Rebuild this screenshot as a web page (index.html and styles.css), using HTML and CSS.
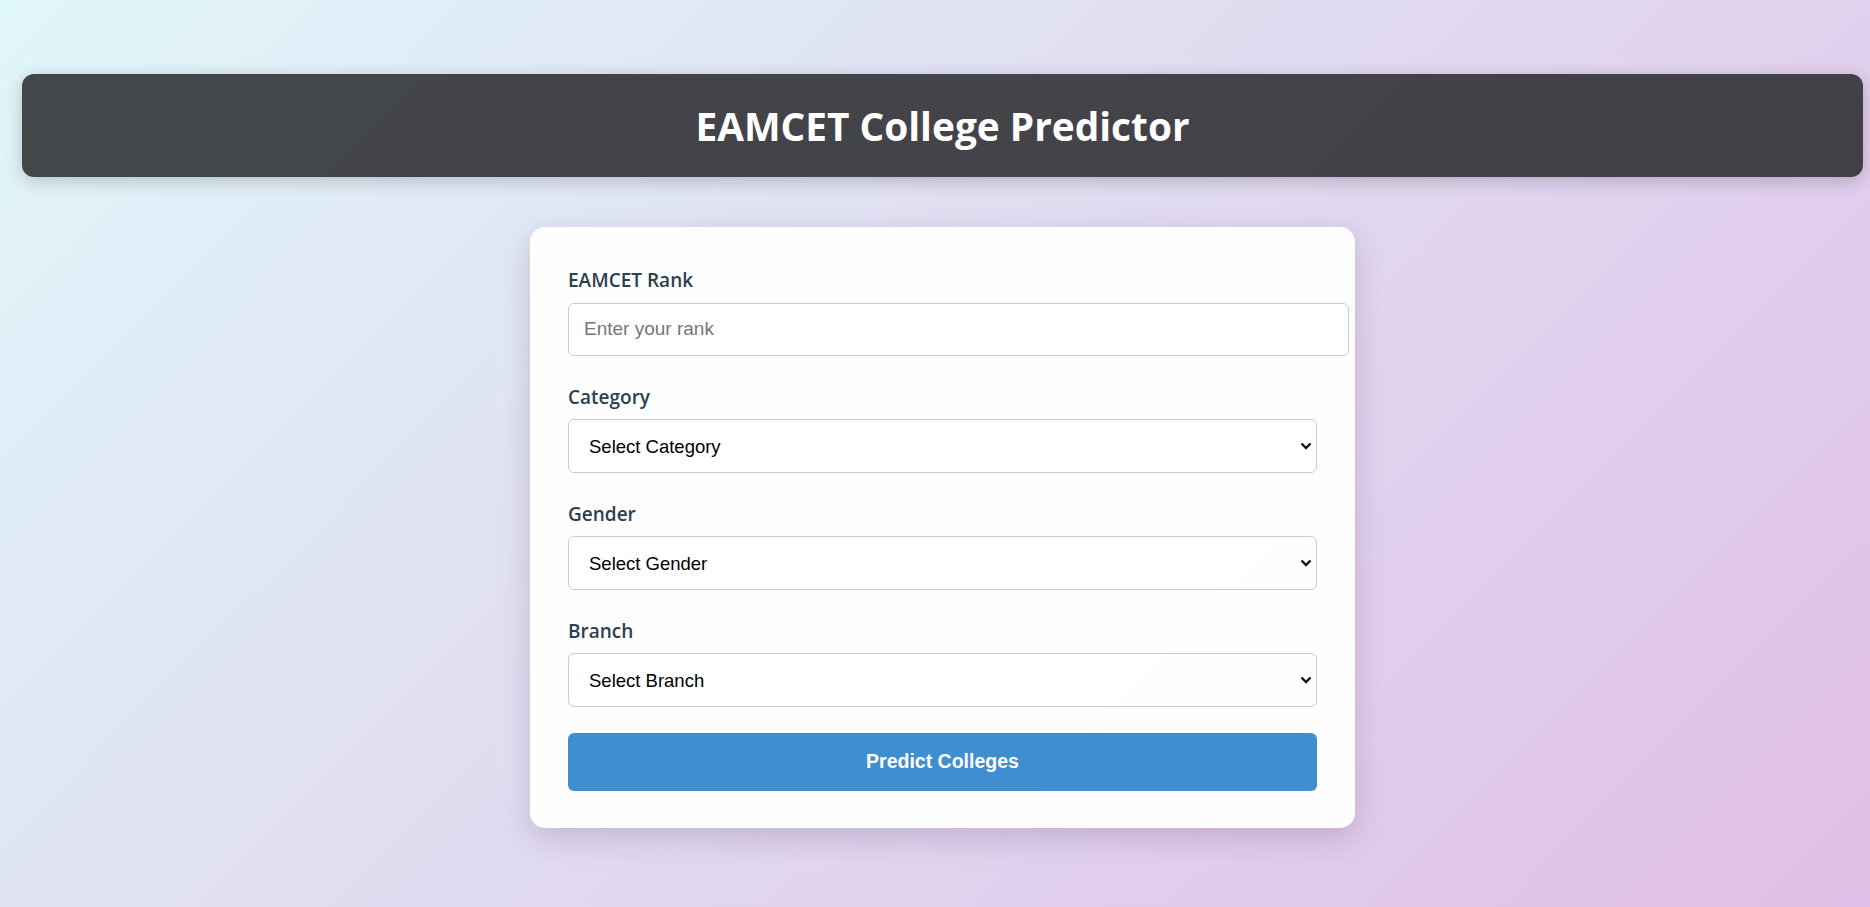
FILE: index.html
```html
<!DOCTYPE html>
<html lang="en">
<head>
<meta charset="utf-8">
<title>EAMCET College Predictor</title>
<link rel="stylesheet" href="styles.css">
</head>
<body>
  <header class="header">
    <h1 class="title">EAMCET College Predictor</h1>
  </header>
  <main class="card">
    <form class="form">
      <div class="group">
        <label class="label" for="rank">EAMCET Rank</label>
        <input class="input" id="rank" type="number" placeholder="Enter your rank">
      </div>
      <div class="group">
        <label class="label" for="category">Category</label>
        <div class="select-wrap">
          <select class="select" id="category"><option>Select Category</option></select>
          <svg class="chevron" width="12" height="8" viewBox="0 0 12 8"><path d="M1.5 1.5 L6 6 L10.5 1.5" fill="none" stroke="#111" stroke-width="2.4"/></svg>
        </div>
      </div>
      <div class="group">
        <label class="label" for="gender">Gender</label>
        <div class="select-wrap">
          <select class="select" id="gender"><option>Select Gender</option></select>
          <svg class="chevron" width="12" height="8" viewBox="0 0 12 8"><path d="M1.5 1.5 L6 6 L10.5 1.5" fill="none" stroke="#111" stroke-width="2.4"/></svg>
        </div>
      </div>
      <div class="group">
        <label class="label" for="branch">Branch</label>
        <div class="select-wrap">
          <select class="select" id="branch"><option>Select Branch</option></select>
          <svg class="chevron" width="12" height="8" viewBox="0 0 12 8"><path d="M1.5 1.5 L6 6 L10.5 1.5" fill="none" stroke="#111" stroke-width="2.4"/></svg>
        </div>
      </div>
      <button class="button" type="button">Predict Colleges</button>
    </form>
  </main>
</body>
</html>
```
FILE: styles.css
```css
* { box-sizing: border-box; }

html, body { height: 100%; }

body {
  margin: 0;
  min-height: 907px;
  padding: 74px 7px 40px 22px;
  background: linear-gradient(135deg, #e0f7fa 0%, #e1bee7 100%);
  font-family: "Open Sans", "Noto Sans", sans-serif;
  overflow: hidden;
}

.header {
  height: 103px;
  border-radius: 12px;
  background: rgba(28, 28, 30, 0.8);
  box-shadow: 0 4px 18px rgba(0, 0, 0, 0.2);
  display: flex;
  align-items: center;
  justify-content: center;
}

.title {
  margin: 0;
  color: #fff;
  font-size: 38.8px;
  font-weight: 700;
  line-height: 1;
  padding-top: 2px;
}

.card {
  width: 825px;
  margin: 50px auto 0;
  padding: 38px 38px 37px;
  border-radius: 15px;
  background: rgba(255, 255, 255, 0.96);
  box-shadow: 0 10px 30px rgba(60, 30, 80, 0.18);
}

.form { display: flex; flex-direction: column; }

.group { margin-bottom: 25.5px; }

.label {
  display: block;
  margin-bottom: 7.5px;
  color: #2c3e50;
  font-size: 19px;
  font-weight: 600;
  line-height: 30px;
}

.input {
  display: block;
  width: calc(100% + 32px);
  height: 53.5px;
  padding: 0 15px;
  border: 1px solid #cccccc;
  border-radius: 6px;
  background: rgba(255, 255, 255, 0.6);
  font-family: "Liberation Sans", Arial, sans-serif;
  font-size: 19px;
  color: #111;
  outline: none;
  -moz-appearance: textfield;
}
.input::-webkit-outer-spin-button,
.input::-webkit-inner-spin-button { -webkit-appearance: none; margin: 0; }
.input::placeholder { color: #767676; }

.select-wrap { position: relative; }

.select {
  display: block;
  width: 100%;
  height: 54px;
  padding: 0 30px 0 20px;
  border: 1px solid #cccccc;
  border-radius: 6px;
  background: rgba(255, 255, 255, 0.6);
  font-family: "Liberation Sans", Arial, sans-serif;
  font-size: 18.5px;
  color: #000;
  -webkit-appearance: none;
  appearance: none;
  outline: none;
}

.chevron {
  position: absolute;
  right: 5px;
  top: 50%;
  margin-top: -4px;
  pointer-events: none;
}

.button {
  display: block;
  width: 100%;
  height: 58px;
  border: none;
  border-radius: 6px;
  background: #3f8ed0;
  color: #fff;
  font-family: "Liberation Sans", Arial, sans-serif;
  font-size: 19.5px;
  font-weight: 700;
  cursor: pointer;
}
```
